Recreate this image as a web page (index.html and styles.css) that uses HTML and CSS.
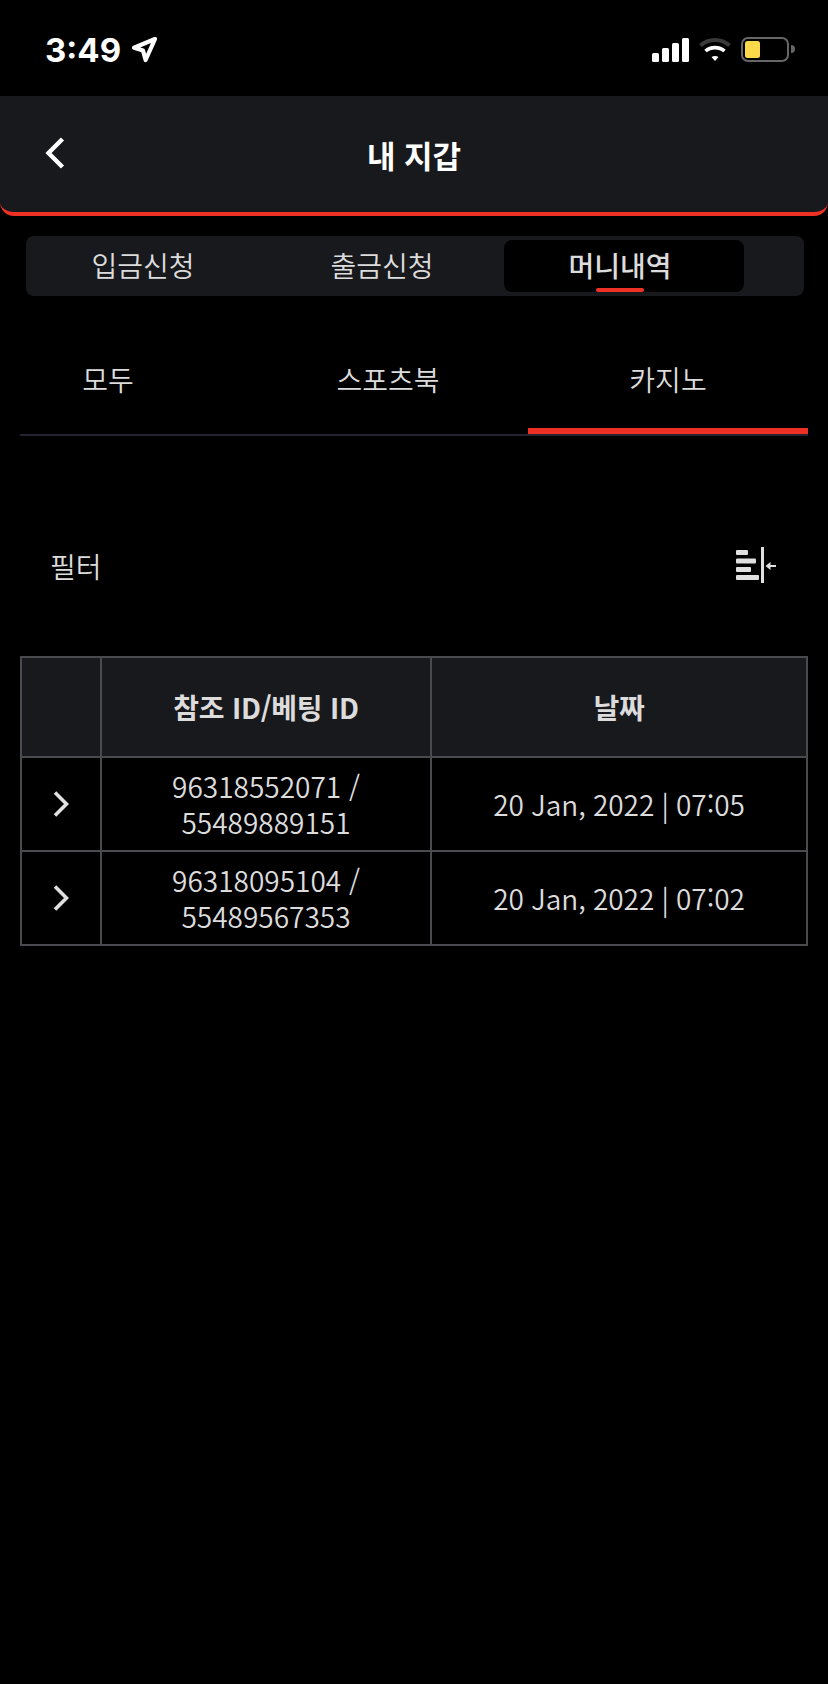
FILE: index.html
```html
<!DOCTYPE html>
<html lang="ko">
<head>
<meta charset="utf-8">
<title>내 지갑</title>
<link rel="stylesheet" href="styles.css">
</head>
<body>
<div class="status">
  <div class="status-left">
    <span class="time">3:49</span>
    <svg class="loc" width="28" height="28" viewBox="0 0 28 28"><path d="M25 3 4 11.800 13 14.600 15.600 24Z" fill="none" stroke="#fff" stroke-width="4.200" stroke-linejoin="round"/></svg>
  </div>
  <div class="status-right">
    <svg width="37" height="24" viewBox="0 0 37 24"><rect x="0" y="15" width="7" height="9" rx="1.500" fill="#fff"/><rect x="10" y="10" width="7" height="14" rx="1.500" fill="#fff"/><rect x="20" y="5" width="7" height="19" rx="1.500" fill="#fff"/><rect x="30" y="0" width="7" height="24" rx="1.500" fill="#fff"/></svg>
    <svg class="wifi" width="32" height="24" viewBox="0 0 32 24"><path d="M1.500 8.500C9.500 1 22.500 1 30.500 8.500" fill="none" stroke="#3a3a3a" stroke-width="4"/><path d="M6.500 14C11.500 9.500 20.500 9.500 25.500 14" fill="none" stroke="#fff" stroke-width="3.600"/><path d="M12.500 20 16 24 19.500 20C17.500 18.500 14.500 18.500 12.500 20Z" fill="#fff"/></svg>
    <div class="battery"><div class="battery-fill"></div></div>
    <div class="battery-cap"></div>
  </div>
</div>

<header class="topbar">
  <svg class="back" width="20" height="32" viewBox="0 0 20 32"><path d="M17.500 2 3.500 16 17.500 30" fill="none" stroke="#fff" stroke-width="4.400"/></svg>
  <h1 class="title">내 지갑</h1>
</header>

<nav class="tabs">
  <div class="tab">입금신청</div>
  <div class="tab">출금신청</div>
  <div class="tab tab-active">머니내역<span class="tab-mark"></span></div>
</nav>

<nav class="subtabs">
  <div class="subtab">모두</div>
  <div class="subtab">스포츠북</div>
  <div class="subtab subtab-active">카지노</div>
</nav>

<div class="filter">
  <span class="filter-label">필터</span>
  <svg class="filter-icon" width="40" height="36" viewBox="0 0 40 36"><g fill="#e0e0e0"><rect x="0" y="3" width="12" height="5" rx="1"/><rect x="0" y="11.500" width="20" height="5" rx="1"/><rect x="0" y="20" width="15" height="5" rx="1"/><rect x="0" y="28" width="23" height="5" rx="1"/><rect x="25" y="0" width="3" height="36"/><rect x="32" y="18" width="8" height="2"/><path d="M29.500 19 34.500 15V23Z"/></g></svg>
</div>

<table class="grid">
  <colgroup><col class="c1"><col class="c2"><col class="c3"></colgroup>
  <thead>
    <tr><th></th><th>참조 ID/베팅 ID</th><th>날짜</th></tr>
  </thead>
  <tbody>
    <tr>
      <td><svg class="chev" width="16" height="26" viewBox="0 0 16 26"><path d="M2 1.500 13.500 13 2 24.500" fill="none" stroke="#e0e0e0" stroke-width="3.600"/></svg></td>
      <td>96318552071 /<br>55489889151</td>
      <td class="date">20 Jan, 2022 | 07<span class="colon">:</span>05</td>
    </tr>
    <tr>
      <td><svg class="chev" width="16" height="26" viewBox="0 0 16 26"><path d="M2 1.500 13.500 13 2 24.500" fill="none" stroke="#e0e0e0" stroke-width="3.600"/></svg></td>
      <td>96318095104 /<br>55489567353</td>
      <td class="date">20 Jan, 2022 | 07<span class="colon">:</span>02</td>
    </tr>
  </tbody>
</table>
</body>
</html>
```

FILE: styles.css
```css
* { box-sizing: border-box; }
html, body { margin: 0; padding: 0; }
body {
  width: 828px;
  height: 1684px;
  background: #000;
  color: #dcdcdc;
  font-family: "Noto Sans CJK KR", "Noto Sans", sans-serif;
  font-size: 28px;
  font-weight: 350;
  overflow: hidden;
}
.status {
  height: 96px;
  display: flex;
  justify-content: space-between;
  padding: 36px 0 0 45px;
}
.status-left { display: flex; align-items: flex-start; gap: 9px; height: 28px; }
.time {
  font-family: Inter, sans-serif;
  font-weight: 700;
  font-size: 33px;
  line-height: 28px;
  color: #fff;
}
.status-right { display: flex; align-items: flex-start; margin-right: 33px; height: 28px; margin-top: 2px; }
.status-right .wifi { margin-left: 10px; margin-top: -1px; }
.battery {
  width: 48px;
  height: 25px;
  margin-left: 10px;
  margin-top: -1px;
  border: 2px solid #666;
  border-radius: 7px;
  padding: 2px;
}
.battery-fill { width: 15px; height: 100%; background: #fcd94a; border-radius: 2.5px; }
.battery-cap { width: 4px; height: 8px; margin-top: 7px; margin-left: 2px; background: #666; border-radius: 0 4px 4px 0; }
.topbar {
  height: 120px;
  background: #18191d;
  border-bottom: 4px solid #ee3124;
  border-radius: 0 0 14px 14px;
  position: relative;
  display: flex;
  justify-content: center;
}
.back { position: absolute; left: 45px; top: 41px; }
.title {
  margin: 0;
  font-size: 31px;
  font-weight: 700;
  line-height: 118px;
  color: #fff;
}
.tabs {
  display: flex;
  height: 60px;
  margin: 20px 24px 0 26px;
  background: #18191d;
  border-radius: 8px;
}
.tab {
  flex: 0 0 239px;
  height: 52px;
  margin-top: 4px;
  padding-right: 5px;
  text-align: center;
  line-height: 50px;
  color: #dcdcdc;
}
.tab-active {
  flex-basis: 240px;
  padding-right: 8px;
  background: #000;
  border-radius: 8px;
  font-weight: 500;
  position: relative;
}
.tab-mark {
  position: absolute;
  left: 92px;
  bottom: 0;
  width: 48px;
  height: 4px;
  background: #ee3124;
  border-radius: 2px;
}
.subtabs {
  display: flex;
  justify-content: flex-end;
  height: 140px;
  margin: 0 20px;
  border-bottom: 2px solid #23242e;
  overflow: hidden;
}
.subtab {
  flex: 0 0 280px;
  height: 138px;
  text-align: center;
  line-height: 166px;
}
.subtab-active { border-bottom: 6px solid #ee3124; height: 138px; }
.filter {
  display: flex;
  justify-content: space-between;
  align-items: center;
  height: 220px;
  padding: 40px 54px 0 50px;
}
.filter-icon { margin-right: -2px; margin-top: -2px; }
.grid {
  width: 788px;
  margin-left: 20px;
  table-layout: fixed;
  border-collapse: separate;
  border-spacing: 0;
  text-align: center;
}
.c1 { width: 82px; }
.c2 { width: 330px; }
.c3 { width: 376px; }
.grid th, .grid td {
  padding: 0;
  border-right: 2px solid #4a4b4f;
  border-bottom: 2px solid #4a4b4f;
  vertical-align: middle;
}
.grid th:first-child, .grid td:first-child { border-left: 2px solid #4a4b4f; }
.grid th {
  border-top: 2px solid #4a4b4f;
  height: 102px;
  background: #18191d;
  font-weight: 700;
  font-size: 28px;
  letter-spacing: -0.25px;
  color: #dcdcdc;
}
.grid td { height: 94px; line-height: 36px; color: #dcdcdc; }
.grid .date { word-spacing: -0.6px; letter-spacing: -0.05px; }
.colon { vertical-align: 1px; line-height: 1; }
.chev { display: block; margin: 0 auto; }
```
